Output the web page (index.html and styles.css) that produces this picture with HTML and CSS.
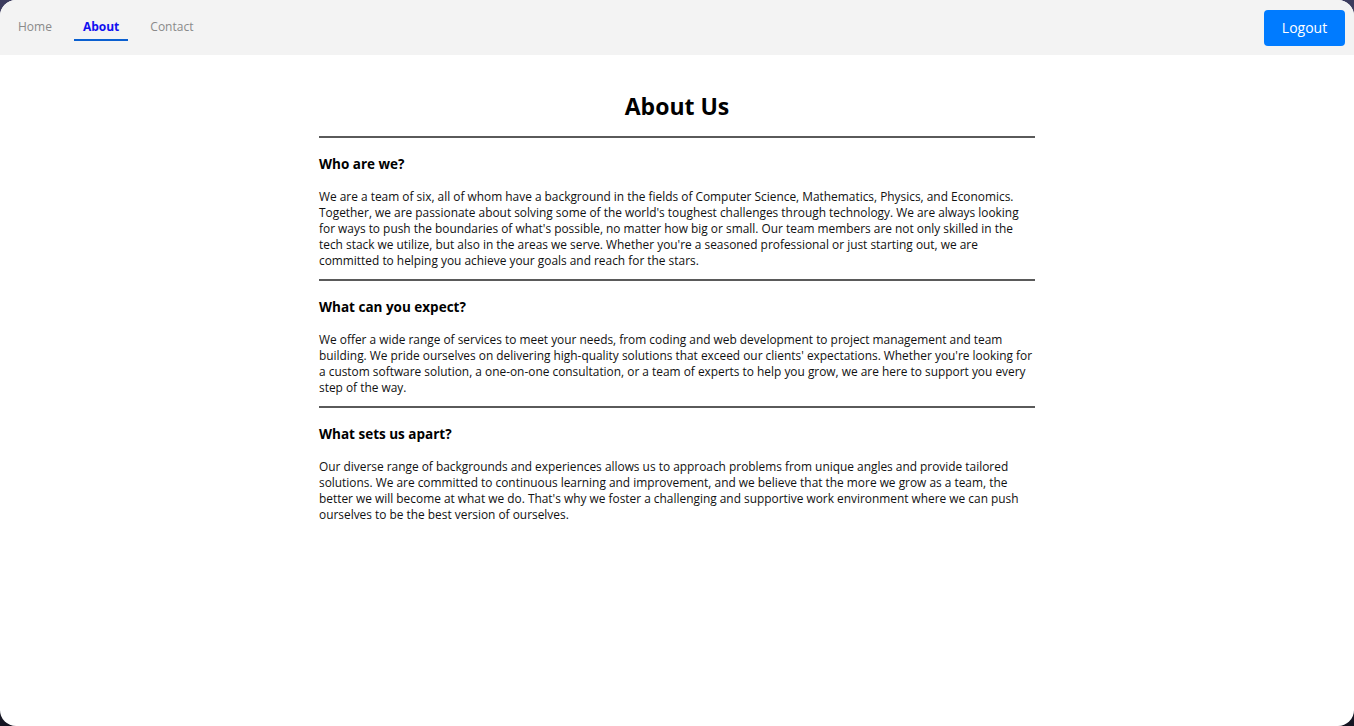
FILE: index.html
```html
<!DOCTYPE html>
<html>
<head><meta charset="utf-8"><title>About</title><link rel="stylesheet" href="styles.css"></head>
<body>
<div class="window">
  <header class="navbar">
    <nav class="nav-links">
      <a class="nav-link" href="#">Home</a>
      <a class="nav-link active" href="#">About</a>
      <a class="nav-link" href="#">Contact</a>
    </nav>
    <button class="logout">Logout</button>
  </header>
  <main class="content">
    <h1 class="title">About Us</h1>
    <hr class="rule">
    <section class="block">
      <h3 class="block-title">Who are we?</h3>
      <p class="block-text">We are a team of six, all of whom have a background in the fields of Computer Science, Mathematics, Physics, and Economics. Together, we are passionate about solving some of the world's toughest challenges through technology. We are always looking for ways to push the boundaries of what's possible, no matter how big or small. Our team members are not only skilled in the tech stack we utilize, but also in the areas we serve. Whether you're a seasoned professional or just starting out, we are committed to helping you achieve your goals and reach for the stars.</p>
    </section>
    <hr class="rule">
    <section class="block">
      <h3 class="block-title">What can you expect?</h3>
      <p class="block-text">We offer a wide range of services to meet your needs, from coding and web development to project management and team building. We pride ourselves on delivering high-quality solutions that exceed our clients' expectations. Whether you're looking for a custom software solution, a one-on-one consultation, or a team of experts to help you grow, we are here to support you every step of the way.</p>
    </section>
    <hr class="rule">
    <section class="block">
      <h3 class="block-title">What sets us apart?</h3>
      <p class="block-text">Our diverse range of backgrounds and experiences allows us to approach problems from unique angles and provide tailored solutions. We are committed to continuous learning and improvement, and we believe that the more we grow as a team, the better we will become at what we do. That's why we foster a challenging and supportive work environment where we can push ourselves to be the best version of ourselves.</p>
    </section>
  </main>
</div>
</body>
</html>
```
FILE: styles.css
```css
html, body {
  margin: 0;
  height: 100%;
}
body {
  background: linear-gradient(180deg, #3c3c5e 0%, #2a2a44 60%, #151522 100%);
  font-family: "Open Sans", "Noto Sans", sans-serif;
}
.window {
  height: 100%;
  background: #ffffff;
  border-radius: 16px;
  overflow: hidden;
  display: flex;
  flex-direction: column;
}
.navbar {
  height: 55px;
  flex: none;
  background: #f3f3f3;
  display: flex;
  align-items: center;
  justify-content: space-between;
  padding: 0 9px;
}
.nav-links {
  display: flex;
  gap: 13px;
  align-self: stretch;
  align-items: stretch;
}
.nav-link {
  font-size: 12px;
  color: #8a8a8a;
  text-decoration: none;
  padding: 14px 9px 0;
  display: flex;
  align-items: center;
  margin-bottom: 14px;
  border-bottom: 2px solid transparent;
}
.nav-link.active {
  color: #1010f0;
  font-weight: 700;
  border-bottom-color: #0a5fd0;
}
.logout {
  width: 81px;
  height: 36px;
  border: 0;
  border-radius: 4px;
  background: #007bff;
  color: #ffffff;
  font-family: inherit;
  font-size: 14px;
  padding: 0;
  cursor: pointer;
}
.content {
  width: 716px;
  margin: 0 auto;
}
.title {
  margin: 35px 0 14px;
  font-size: 23px;
  line-height: 32px;
  font-weight: 700;
  text-align: center;
  color: #000;
}
.rule {
  border: 0;
  height: 2px;
  background: #5a5a5a;
  margin: 0;
}
.block {
  padding: 16px 0 11px;
}
.block-title {
  margin: 0 0 14px;
  font-size: 13.5px;
  line-height: 20px;
  font-weight: 700;
  color: #000;
}
.block-text {
  margin: 0;
  font-size: 11.9px;
  line-height: 16px;
  color: #111;
}
```
